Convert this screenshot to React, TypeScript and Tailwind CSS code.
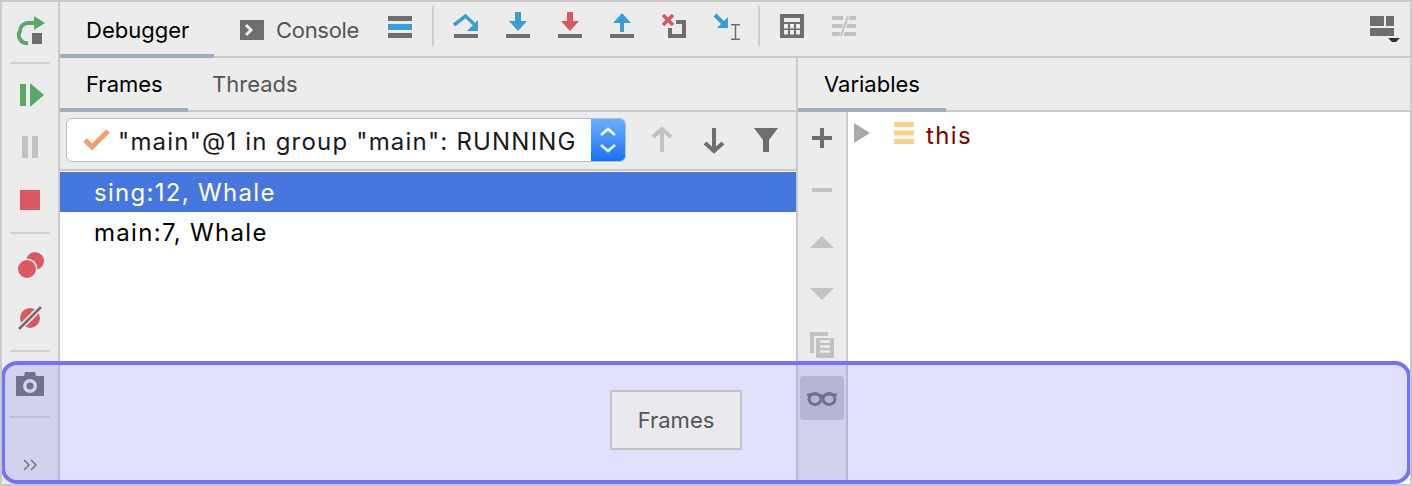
import React from 'react';

const GRAY = '#6e6e6e';
const LIGHT = '#c2c2c2';
const BLUE = '#389fd6';
const RED = '#db5860';
const GREEN = '#59a869';

const Icon = ({ children, className = '', w = 32 }: { children: React.ReactNode; className?: string; w?: number }) => (
  <svg width={w} height={32} viewBox={`0 0 ${w} 32`} className={`shrink-0 ${className}`}>
    {children}
  </svg>
);

const Underline = () => <rect x="4" y="24" width="24" height="4" fill={GRAY} />;

const ArrowInto = ({ color }: { color: string }) => (
  <Icon>
    <rect x="13" y="2" width="6" height="10" fill={color} />
    <path d="M7 11H25L16 21Z" fill={color} />
    <Underline />
  </Icon>
);

const Sep = () => <div className="w-[40px] h-[2px] bg-[#d0d0d0]" />;

const LeftToolbar = () => (
  <div className="w-[56px] shrink-0 border-r-2 border-[#c9c9c9] box-content flex flex-col items-center pt-[12px]">
    <Icon>
      <path d="M21 9H14A8 8 0 0 0 6 17A8 8 0 0 0 14 29" fill="none" stroke={GREEN} strokeWidth="4" />
      <path d="M20 2L31 9L20 16Z" fill={GREEN} />
      <rect x="18" y="19" width="10" height="11" fill={GRAY} />
    </Icon>
    <div className="mt-[16px]"><Sep /></div>
    <Icon className="mt-[15px]">
      <rect x="6" y="5" width="6" height="22" fill={GREEN} />
      <path d="M16 4L30 16L16 28Z" fill={GREEN} />
    </Icon>
    <Icon className="mt-[20px]">
      <rect x="8" y="5" width="6" height="22" fill={LIGHT} />
      <rect x="18" y="5" width="6" height="22" fill={LIGHT} />
    </Icon>
    <Icon className="mt-[21px]">
      <rect x="6" y="6" width="20" height="20" fill={RED} />
    </Icon>
    <div className="mt-[16px]"><Sep /></div>
    <Icon className="mt-[15px]">
      <circle cx="21" cy="12" r="9" fill={RED} />
      <circle cx="13" cy="20" r="10.5" fill="#ececec" />
      <circle cx="13" cy="20" r="9" fill={RED} />
    </Icon>
    <Icon className="mt-[21px]">
      <circle cx="16" cy="16" r="10" fill={RED} />
      <path d="M4 28L28 4" stroke="#ececec" strokeWidth="6" />
      <path d="M5 27L27 5" stroke={GRAY} strokeWidth="2.5" />
    </Icon>
    <div className="mt-[16px]"><Sep /></div>
    <Icon className="mt-[17px]">
      <path d="M2 7H10L11 3H21L22 7H30V27H2Z" fill={GRAY} />
      <circle cx="16" cy="17" r="7" fill="#ececec" />
      <circle cx="16" cy="17" r="3.5" fill={GRAY} />
    </Icon>
    <div className="mt-[15px]"><Sep /></div>
    <Icon className="mt-[31px]">
      <path d="M10 11L15 16L10 21M17 11L22 16L17 21" fill="none" stroke={GRAY} strokeWidth="1.5" />
    </Icon>
  </div>
);

const TopBar = () => (
  <div className="h-[56px] shrink-0 border-b-2 border-[#c9c9c9] flex items-start">
    <div className="w-[154px] h-[56px] border-b-4 border-[#9fadc0] pl-[26px] text-[22px] leading-[56px] text-black">Debugger</div>
    <div className="w-[170px] pl-[26px] flex items-center h-[54px] pt-[2px] text-[22px] tracking-[-0.3px] text-[#555]">
      <svg width="24" height="20" viewBox="0 0 24 20" className="shrink-0 mr-[12px]">
        <rect width="24" height="20" fill={GRAY} />
        <path d="M6 5L11 10L6 15" fill="none" stroke="#ececec" strokeWidth="3" />
      </svg>
      Console
    </div>
    <Icon className="mt-[8px]">
      <rect x="4" y="6" width="24" height="5" fill={GRAY} />
      <rect x="4" y="14" width="24" height="6" fill={BLUE} />
      <rect x="4" y="23" width="24" height="5" fill={GRAY} />
    </Icon>
    <div className="w-[2px] h-[40px] bg-[#cfcfcf] mt-[4px] mx-[16px]" />
    <div className="flex gap-[20px] mt-[8px]">
      <Icon>
        <path d="M4 15L15.5 6L24 14" fill="none" stroke={BLUE} strokeWidth="3.5" />
        <path d="M28 10V21H17Z" fill={BLUE} />
        <Underline />
      </Icon>
      <ArrowInto color={BLUE} />
      <ArrowInto color={RED} />
      <Icon>
        <path d="M16 3L25 13H7Z" fill={BLUE} />
        <rect x="14" y="13" width="4" height="9" fill={BLUE} />
        <Underline />
      </Icon>
      <Icon>
        <path d="M5 5L15 15M15 5L5 15" stroke={RED} strokeWidth="3.5" />
        <path d="M18 12H26V26H12V18" fill="none" stroke={GRAY} strokeWidth="4" />
      </Icon>
      <Icon>
        <path d="M5 5L14 14" stroke={BLUE} strokeWidth="4" />
        <path d="M18 7V18H7Z" fill={BLUE} />
        <path d="M21 14.7H30M21 29.3H30M25.5 15V29" fill="none" stroke={GRAY} strokeWidth="1.5" />
      </Icon>
    </div>
    <div className="w-[2px] h-[40px] bg-[#cfcfcf] mt-[4px] mx-[16px]" />
    <div className="flex gap-[20px] mt-[8px]">
      <Icon>
        <rect x="4" y="4" width="24" height="24" fill={GRAY} />
        <rect x="8" y="8" width="16" height="4" fill="#ececec" />
        <rect x="8" y="14" width="4" height="4.5" fill="#ececec" />
        <rect x="14" y="14" width="4" height="4.5" fill="#ececec" />
        <rect x="20" y="14" width="4" height="4.5" fill="#ececec" />
        <rect x="8" y="20" width="4" height="4.5" fill="#ececec" />
        <rect x="14" y="20" width="4" height="4.5" fill="#ececec" />
        <rect x="20" y="20" width="4" height="4.5" fill="#ececec" />
      </Icon>
      <Icon>
        <path d="M4 8H15M4 16H15M4 24H13M18 8H28M17 16H28M16 24H28" stroke={LIGHT} strokeWidth="4" />
        <path d="M20 5L13 27" stroke="#ececec" strokeWidth="4" />
        <path d="M20 6L13 26" stroke={LIGHT} strokeWidth="2" />
      </Icon>
    </div>
    <Icon w={36} className="ml-auto mr-[8px] mt-[8px]">
      <rect x="4" y="6" width="14" height="10" fill={GRAY} />
      <rect x="20" y="6" width="8" height="10" fill={GRAY} />
      <rect x="4" y="18" width="24" height="8" fill={GRAY} />
      <path d="M22 28H34L28 34Z" fill="#333" />
    </Icon>
  </div>
);

const FramesPanel = () => (
  <div className="w-[738px] shrink-0 border-r-2 border-[#c9c9c9] flex flex-col">
    <div className="h-[54px] shrink-0 border-b-2 border-[#c9c9c9] flex items-start text-[22px]">
      <div className="w-[128px] h-[54px] border-b-4 border-[#9fadc0] pl-[26px] leading-[52px] text-black">Frames</div>
      <div className="pl-[24px] leading-[52px] text-[#555]">Threads</div>
    </div>
    <div className="h-[59px] shrink-0 border-b-2 border-[#c9c9c9] flex items-start pt-[6px] pl-[6px]">
      <div className="w-[560px] h-[44px] rounded-[6px] border border-[#bcbcbc] bg-white flex items-center overflow-hidden">
        <svg width="30" height="24" viewBox="0 0 30 24" className="ml-[14px] shrink-0">
          <path d="M4 12L11 19L27 3" fill="none" stroke="#f79d6c" strokeWidth="5" />
        </svg>
        <div className="ml-[7px] mt-[4px] flex-1 text-[24px] leading-[40px] tracking-[1.2px] text-[#1a1a1a] whitespace-nowrap">"main"@1 in group "main": RUNNING</div>
        <div className="w-[34px] h-[44px] shrink-0 bg-gradient-to-b from-[#6aaeff] to-[#0a72ff] flex items-center justify-center">
          <svg width="18" height="26" viewBox="0 0 18 26">
            <path d="M2 8L9 2L16 8M2 18L9 24L16 18" fill="none" stroke="#fff" strokeWidth="2.5" />
          </svg>
        </div>
      </div>
      <div className="flex gap-[20px] ml-[20px]">
        <Icon className="mt-[6px]">
          <path d="M16 5V28M7 13L16 5L25 13" fill="none" stroke={LIGHT} strokeWidth="4" />
        </Icon>
        <Icon className="mt-[6px]">
          <path d="M16 4V27M7 19L16 27L25 19" fill="none" stroke={GRAY} strokeWidth="4" />
        </Icon>
        <Icon className="mt-[6px]">
          <path d="M4 4H28L19 16V28H13V16Z" fill={GRAY} />
        </Icon>
      </div>
    </div>
    <div className="flex-1 bg-white pt-px text-[24px] tracking-[1.3px]">
      <div className="h-[40px] bg-[#4677e0] pl-[34px] leading-[42px] text-white">sing:12, Whale</div>
      <div className="h-[40px] pl-[34px] leading-[42px] text-black">main:7, Whale</div>
    </div>
  </div>
);

const Item = ({ children }: { children: React.ReactNode }) => (
  <div className="w-[44px] h-[44px] flex items-center justify-center">
    <Icon>{children}</Icon>
  </div>
);

const VariablesPanel = () => (
  <div className="flex-1 flex flex-col">
    <div className="h-[54px] shrink-0 border-b-2 border-[#c9c9c9] flex items-start text-[22px]">
      <div className="w-[148px] h-[54px] border-b-4 border-[#9fadc0] pl-[26px] leading-[52px] text-black">Variables</div>
    </div>
    <div className="flex-1 flex">
      <div className="w-[48px] border-r-2 border-[#c9c9c9] box-content flex flex-col items-center gap-[8px] pt-[4px]">
        <Item><path d="M16 6V26M6 16H26" stroke={GRAY} strokeWidth="4" /></Item>
        <Item><path d="M6 16H26" stroke={LIGHT} strokeWidth="4" /></Item>
        <Item><path d="M16 10L28 22H4Z" fill={LIGHT} /></Item>
        <Item><path d="M4 10H28L16 22Z" fill={LIGHT} /></Item>
        <Item>
          <path d="M4 2H22V6H8V23H4Z" fill={LIGHT} />
          <path d="M10 8H28V28H10Z" fill={LIGHT} />
          <path d="M14 11.5H24M14 16.5H24M14 21.5H24" stroke="#ececec" strokeWidth="2.5" />
        </Item>
        <div className="w-[44px] h-[44px] rounded-[4px] bg-[#c5c5c8] flex items-center justify-center">
          <Icon>
            <ellipse cx="9" cy="17" rx="6" ry="5.5" fill="none" stroke={GRAY} strokeWidth="3" />
            <ellipse cx="23" cy="17" rx="6" ry="5.5" fill="none" stroke={GRAY} strokeWidth="3" />
            <path d="M1 13Q8 11 16 14Q24 11 31 13" fill="none" stroke={GRAY} strokeWidth="2.5" />
          </Icon>
        </div>
      </div>
      <div className="flex-1 bg-white flex items-start pt-[10px] pl-[6px]">
        <svg width="16" height="20" viewBox="0 0 16 20" className="shrink-0 mt-[1px]">
          <path d="M0 0L16 10L0 20Z" fill="#aaa" />
        </svg>
        <svg width="20" height="22" viewBox="0 0 20 22" className="shrink-0 ml-[24px]">
          <path d="M0 0H20V5H0ZM0 8.5H20V13.5H0ZM0 17H20V22H0Z" fill="#fbd08a" />
        </svg>
        <div className="ml-[12px] mt-[1px] text-[24px] leading-[26px] tracking-[1.4px] text-[#7f0000]">this</div>
      </div>
    </div>
  </div>
);

const App = () => (
  <div className="relative w-[1412px] h-[486px] border-2 border-[#c9c9c9] bg-[#ececec] flex overflow-hidden font-['Inter',Arial,sans-serif]">
    <div className="absolute left-[328px] top-[-2px] w-[188px] h-[2px] bg-[#9fadc0]" />
    <LeftToolbar />
    <div className="flex-1 flex flex-col min-w-0">
      <TopBar />
      <div className="flex-1 flex min-h-0">
        <FramesPanel />
        <VariablesPanel />
      </div>
    </div>
    <div className="absolute left-[-1px] right-[-1px] top-[359px] bottom-0 rounded-[16px] border-[4px] border-[#7272ff] bg-[rgba(130,130,252,0.24)] pl-[605px] pt-[25px]">
      <div className="w-[132px] h-[60px] border-2 border-[#c3c3c3] bg-[#eaeaee] text-[#555] text-[22px] flex items-center justify-center">Frames</div>
    </div>
  </div>
);

export default App;
